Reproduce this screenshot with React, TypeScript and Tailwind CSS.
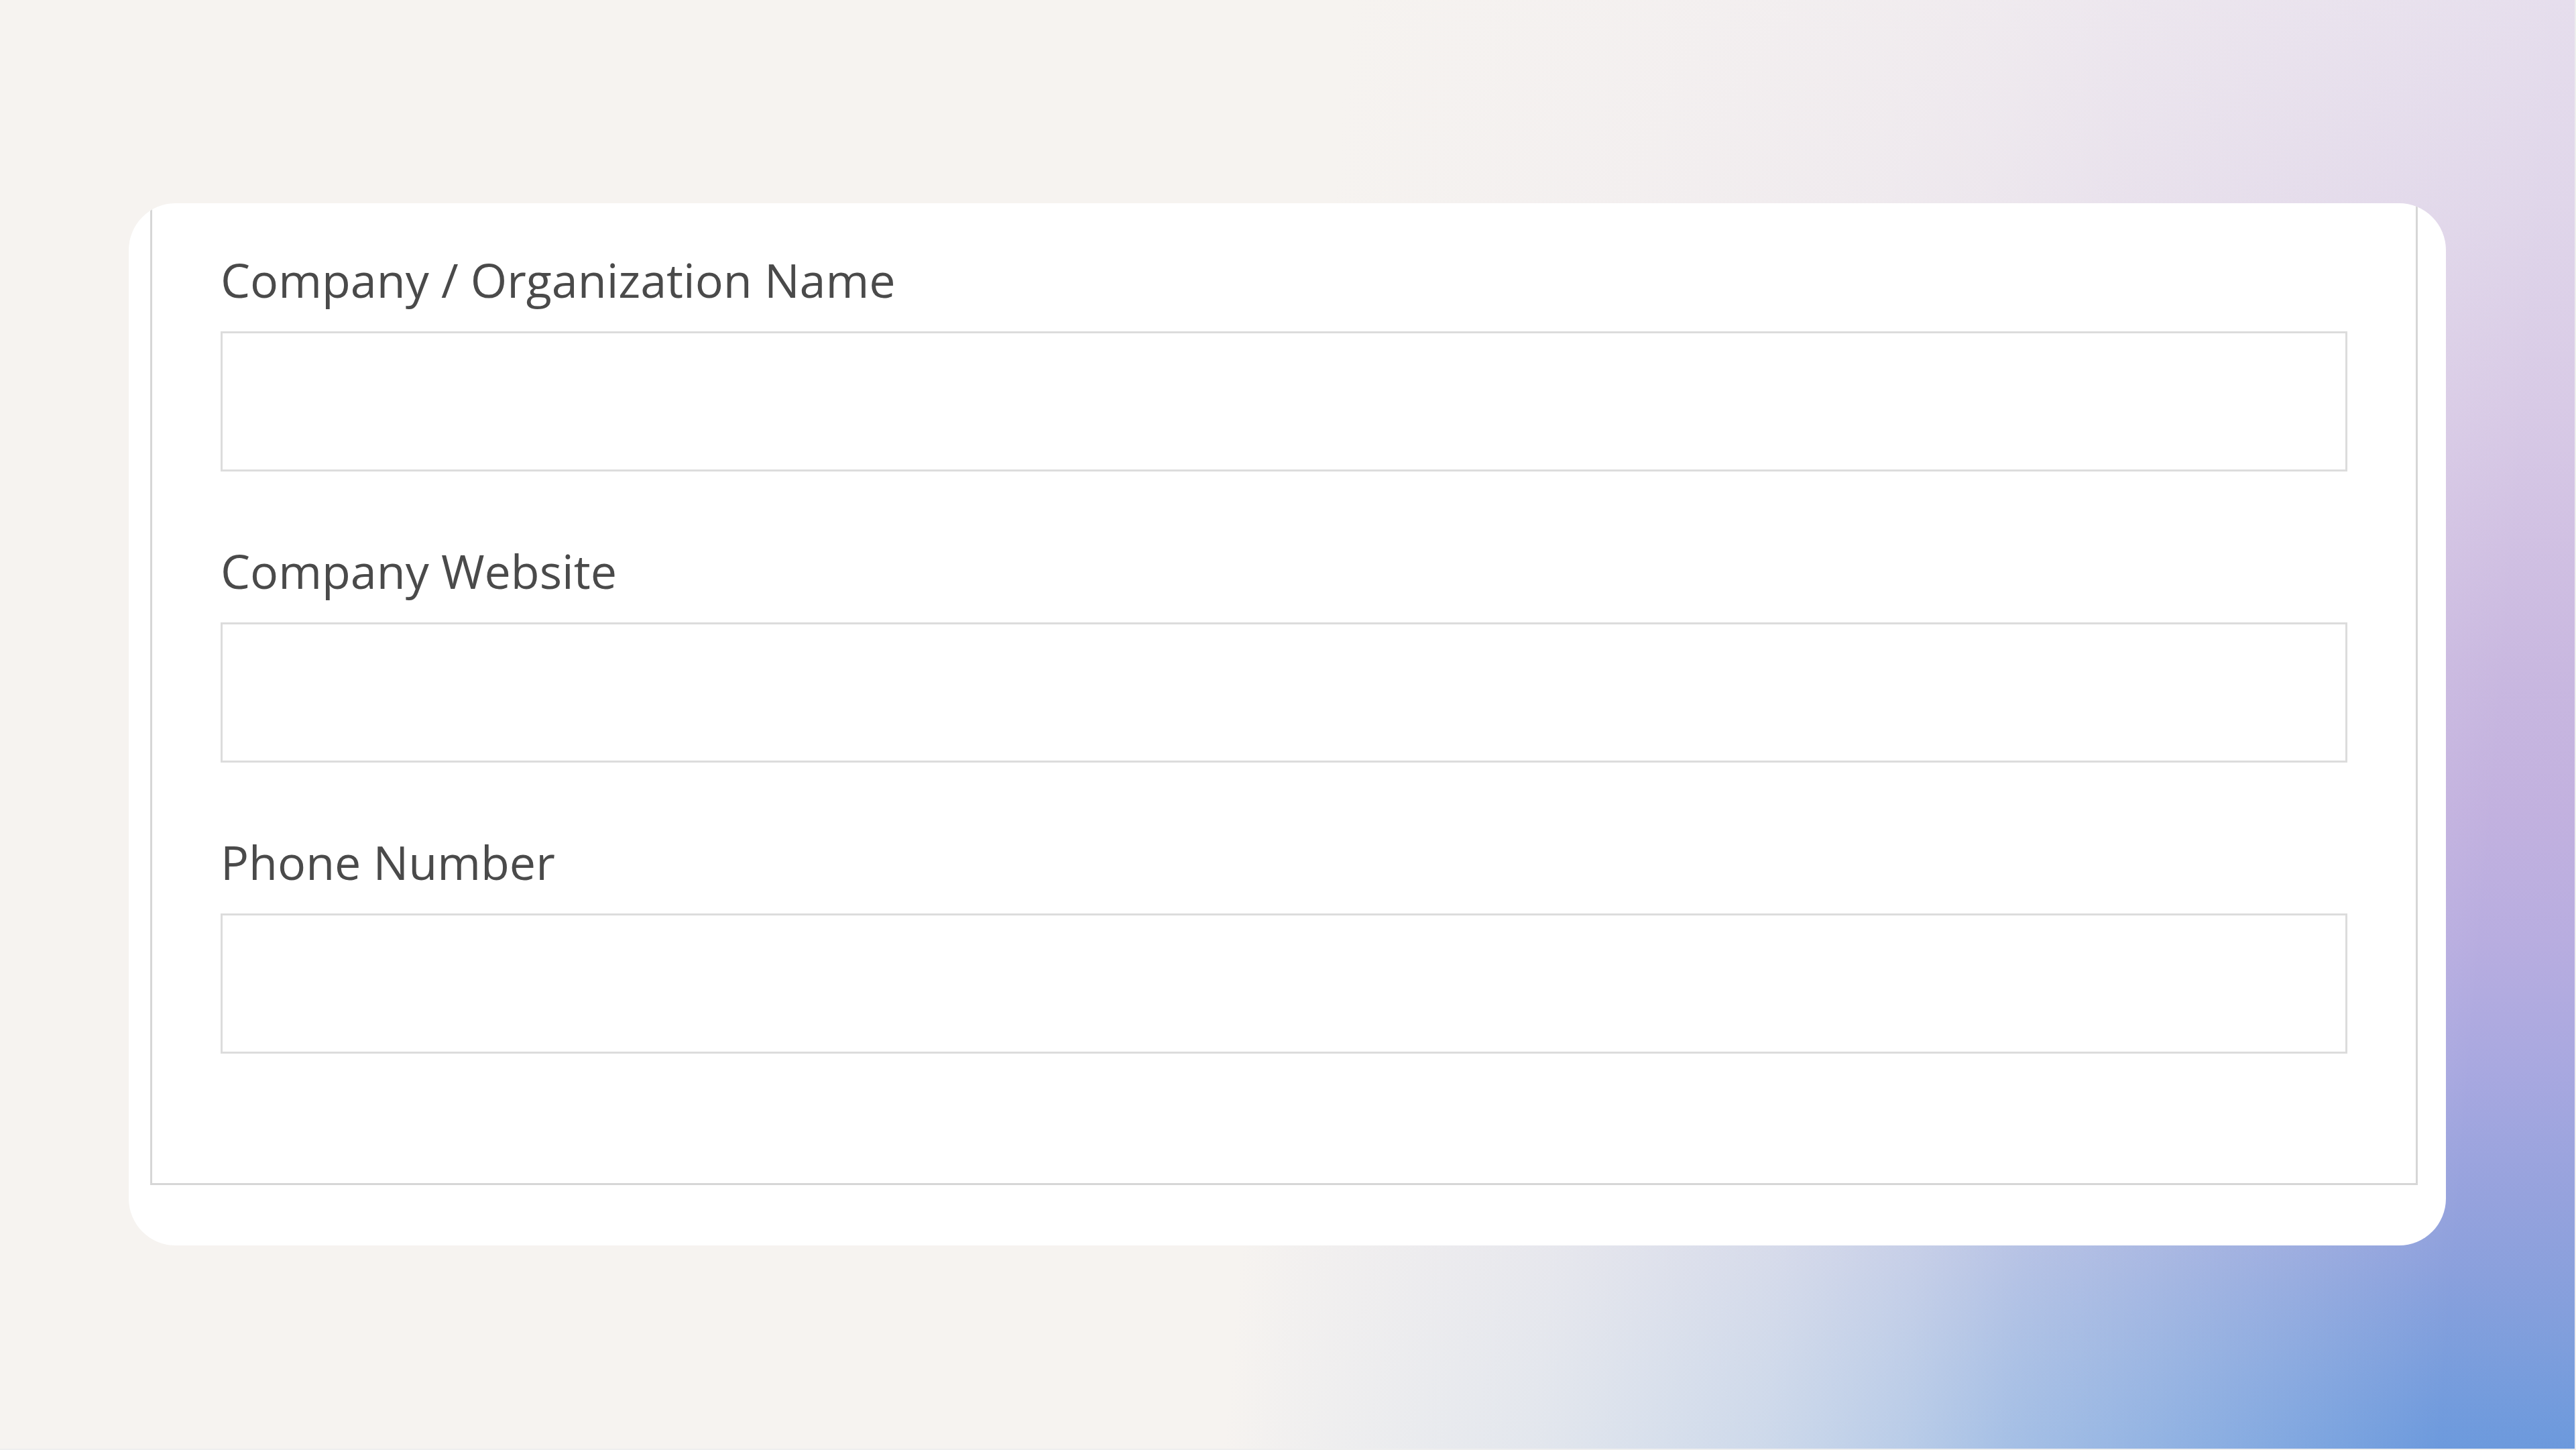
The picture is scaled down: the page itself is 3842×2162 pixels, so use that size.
import React from "react";

const fields = ["Company / Organization Name", "Company Website", "Phone Number"];

export default function App() {
  return (
    <div className="w-[3842px] h-[2162px] bg-[#eeeeee]">
      <div className="w-[3840px] h-[2160px] flex items-center justify-center [background-image:linear-gradient(95deg,rgba(246,243,240,1)_50%,rgba(246,243,240,0.97)_52%,rgba(246,243,240,0.86)_61.5%,rgba(246,243,240,0.7)_70%,rgba(246,243,240,0.56)_75%,rgba(246,243,240,0.41)_79%,rgba(246,243,240,0.28)_84.4%,rgba(246,243,240,0.16)_89%,rgba(246,243,240,0)_95%),radial-gradient(ellipse_1500px_650px_at_72%_112%,rgba(112,160,224,0.85)_0%,rgba(112,160,224,0.4)_55%,rgba(112,160,224,0)_100%),linear-gradient(to_bottom,#e6deed_0%,#e0d6ea_14%,#d8cae6_28%,#d1c1e3_37%,#c9b8e0_46%,#c2b1df_56%,#b8ade0_65%,#a8a8e0_74%,#95a2dd_83%,#7f9edc_93%,#6b98dc_100%)]">
        <div className="w-[3456px] h-[1554px] bg-white rounded-[70px] overflow-hidden pl-[32px] pr-[42px] pb-[90px] flex flex-col">
          <div className="flex-1 border-x-[3px] border-b-[3px] border-[#d6d6d6] px-[102px] pt-[65px] pb-[193px] flex flex-col gap-[99px]">
            {fields.map((f) => (
              <div key={f} className="flex flex-col">
                <label className="block text-[70px] leading-[98px] text-[#4a4a4a] font-['Open_Sans',sans-serif] font-normal">
                  {f}
                </label>
                <input
                  type="text"
                  aria-label={f}
                  className="mt-[28px] h-[209px] w-full border-[3px] border-[#dcdcdc] bg-white outline-none"
                />
              </div>
            ))}
          </div>
        </div>
      </div>
    </div>
  );
}
